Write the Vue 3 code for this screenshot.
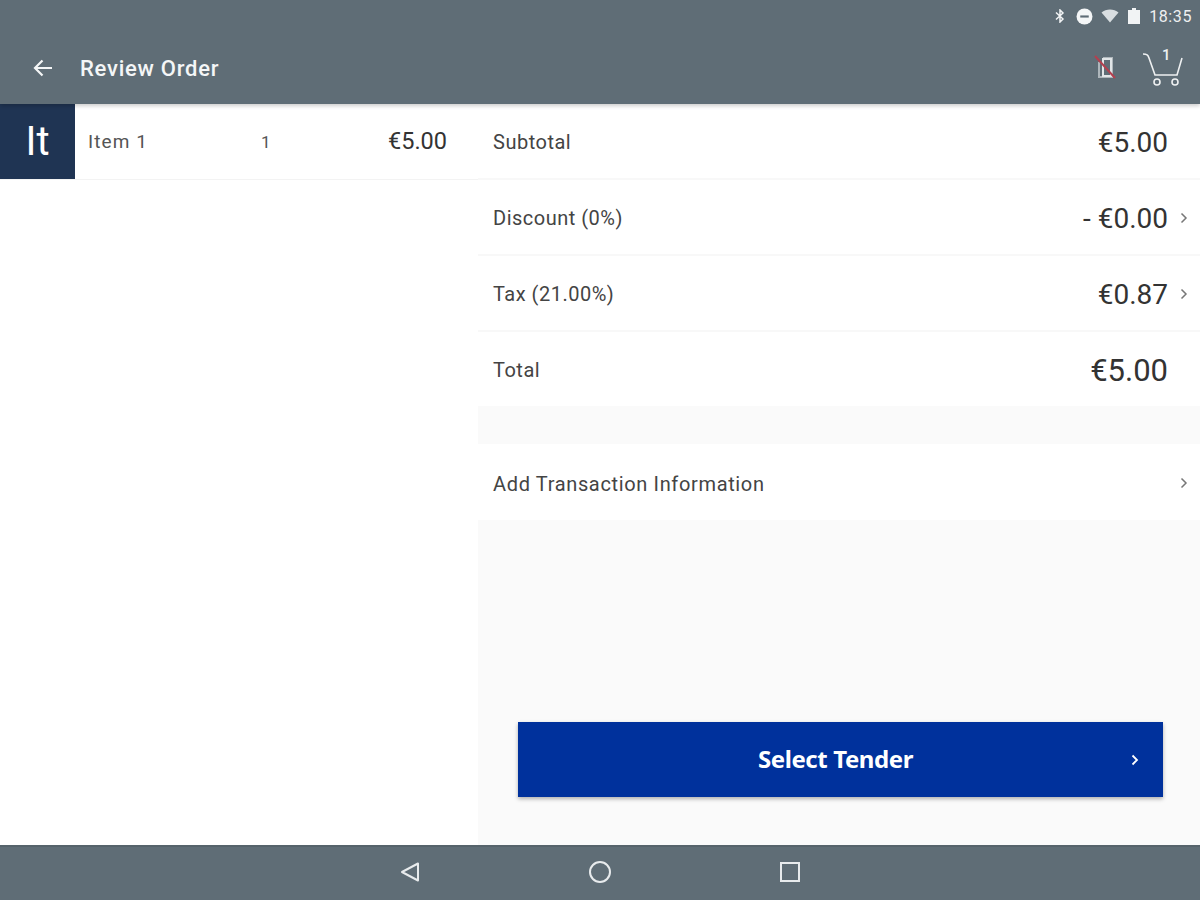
<script setup>
const summary = [
  { label: 'Subtotal', value: '€5.00' },
  { label: 'Discount (0%)', value: '- €0.00', more: true },
  { label: 'Tax (21.00%)', value: '€0.87', more: true }
]
</script>

<template>
  <div class="screen">
    <header class="appbar">
      <div class="status">
        <svg width="10" height="14" viewBox="0 0 10 14" class="st-bt">
          <path d="M1 3.500l7 6.500-3 3V1l3 3-7 6.500" fill="none" stroke="#f2f4f5" stroke-width="1.500" />
        </svg>
        <svg width="17" height="17" viewBox="0 0 16 16">
          <circle cx="8" cy="8" r="7.500" fill="#f4f6f7" />
          <rect x="4" y="7" width="8" height="2" fill="#5f6d76" />
        </svg>
        <svg width="18" height="14" viewBox="0 0 18 14">
          <path d="M0.500 3.500C5 -0.500 13 -0.500 17.500 3.500L9 13.500z" fill="#d9dee1" />
        </svg>
        <svg width="14" height="16" viewBox="0 0 14 16">
          <path d="M5 0h4v2h4v14H1V2h4z" fill="#f1f3f4" />
        </svg>
        <span class="clock">18:35</span>
      </div>
      <div class="toolbar">
        <svg class="back" width="22" height="20" viewBox="0 0 22 20">
          <path d="M20 10H3M10.500 2.500L3 10l7.500 7.500" fill="none" stroke="#f4f6f7" stroke-width="2.200" />
        </svg>
        <h1 class="title">Review Order</h1>
        <svg class="phone-off" width="22" height="28" viewBox="0 0 22 28">
          <path d="M5 8V23H18V4H9" fill="none" stroke="#aeb6bb" stroke-width="2" />
          <rect x="9" y="5" width="8" height="17" fill="none" stroke="#e1e5e7" stroke-width="2" />
          <path d="M1 2L21 24" stroke="#b3404f" stroke-width="2" />
        </svg>
        <div class="cart">
          <span class="cart-count">1</span>
          <svg width="42" height="36" viewBox="0 0 42 36">
            <path d="M1 2C5 2 6 3 7 6L13 23H35L40 6" fill="none" stroke="#eef0f1" stroke-width="1.600" />
            <circle cx="15" cy="30" r="3" fill="none" stroke="#eef0f1" stroke-width="1.600" />
            <circle cx="33" cy="30" r="3" fill="none" stroke="#eef0f1" stroke-width="1.600" />
          </svg>
        </div>
      </div>
    </header>

    <main class="content">
      <section class="items">
        <div class="item">
          <div class="thumb">It</div>
          <span class="item-name">Item 1</span>
          <span class="item-qty">1</span>
          <span class="item-price">€5.00</span>
        </div>
      </section>

      <section class="side">
        <div v-for="row in summary" :key="row.label" class="row">
          <span class="row-label">{{ row.label }}</span>
          <span class="row-value">{{ row.value }}</span>
          <svg v-if="row.more" class="chev" width="8" height="12" viewBox="0 0 8 12">
            <path d="M1.500 1.500L6 6l-4.500 4.500" fill="none" stroke="#777" stroke-width="1.500" />
          </svg>
        </div>
        <div class="row total">
          <span class="row-label">Total</span>
          <span class="row-value">€5.00</span>
        </div>

        <div class="row info">
          <span class="row-label">Add Transaction Information</span>
          <svg class="chev" width="8" height="12" viewBox="0 0 8 12">
            <path d="M1.500 1.500L6 6l-4.500 4.500" fill="none" stroke="#777" stroke-width="1.500" />
          </svg>
        </div>

        <button class="tender" type="button">
          <span>Select Tender</span>
          <svg class="tender-chev" width="8" height="12" viewBox="0 0 8 12">
            <path d="M1.500 1.500L6 6l-4.500 4.500" fill="none" stroke="#fff" stroke-width="1.800" />
          </svg>
        </button>
      </section>
    </main>

    <footer class="navbar">
      <svg width="22" height="22" viewBox="0 0 22 22">
        <path d="M19 2.500V19.500L3 11z" fill="none" stroke="#e8ebed" stroke-width="2" stroke-linejoin="round" />
      </svg>
      <svg width="24" height="24" viewBox="0 0 24 24">
        <circle cx="12" cy="12" r="10" fill="none" stroke="#e8ebed" stroke-width="2" />
      </svg>
      <svg width="22" height="22" viewBox="0 0 22 22">
        <rect x="2" y="2" width="18" height="18" fill="none" stroke="#e8ebed" stroke-width="2" />
      </svg>
    </footer>
  </div>
</template>

<style scoped>
.screen {
  width: 1200px;
  height: 900px;
  display: flex;
  flex-direction: column;
  overflow: hidden;
  font-family: Roboto, "Noto Sans", sans-serif;
  color: #333;
  background: #fff;
}

.appbar {
  height: 104px;
  flex: none;
  background: #5f6d76;
  position: relative;
  z-index: 1;
  box-shadow: 0 2px 4px rgba(0, 0, 0, 0.2);
}

.status {
  height: 32px;
  display: flex;
  align-items: center;
  justify-content: flex-end;
  gap: 8px;
  padding-right: 8px;
  color: #eef0f1;
}

.status .st-bt {
  margin-right: 3px;
}

.clock {
  font-size: 16px;
  letter-spacing: 0.6px;
}

.toolbar {
  height: 72px;
  display: flex;
  align-items: center;
  padding: 0 16px 7px 32px;
}

.title {
  margin: 0 0 0 26px;
  font-size: 22px;
  font-weight: 500;
  letter-spacing: 0.75px;
  color: #f4f6f7;
  flex: 1;
}

.phone-off {
  margin-right: 26px;
}

.cart {
  position: relative;
  width: 42px;
  height: 36px;
  margin-top: 4px;
}

.cart svg {
  display: block;
}

.cart-count {
  position: absolute;
  top: -6px;
  left: 20px;
  font-size: 15px;
  font-weight: 500;
  color: #eef0f1;
}

.content {
  flex: 1;
  display: flex;
  min-height: 0;
}

.items {
  width: 478px;
  flex: none;
  background: #fff;
}

.item {
  height: 76px;
  display: flex;
  align-items: center;
  border-bottom: 1px solid #f3f3f3;
  box-sizing: border-box;
}

.thumb {
  width: 75px;
  height: 75px;
  flex: none;
  background: #1f3453;
  color: #fff;
  font-size: 40px;
  display: flex;
  align-items: center;
  justify-content: center;
}

.item-name {
  width: 173px;
  margin-left: 13px;
  font-size: 19px;
  letter-spacing: 1.100px;
  color: #555;
}

.item-qty {
  font-size: 17px;
  color: #555;
}

.item-price {
  margin-left: auto;
  margin-right: 31px;
  font-size: 23.500px;
  margin-top: -2px;
}

.side {
  flex: 1;
  background: #fafafa;
  display: flex;
  flex-direction: column;
}

.row {
  height: 76px;
  flex: none;
  box-sizing: border-box;
  display: flex;
  align-items: center;
  padding: 2px 32px 0 15px;
  background: #fff;
  border-bottom: 2px solid #f8f8f8;
  position: relative;
}

.row-label {
  font-size: 20px;
  letter-spacing: 0.5px;
  color: #444;
  flex: 1;
}

.row-value {
  font-size: 28px;
  color: #333;
}

.total .row-value {
  font-size: 31px;
}

.total {
  height: 74px;
  border-bottom: none;
}

.info {
  margin-top: 38px;
  height: 76px;
  padding-top: 3px;
  border-bottom: none;
}

.info .row-label {
  letter-spacing: 0.65px;
}

.chev {
  position: absolute;
  right: 12px;
  top: 32px;
}

.info .chev {
  top: 33px;
}

.tender {
  margin: auto 37px 48px 40px;
  height: 75px;
  flex: none;
  border: none;
  padding: 0 10px 2px 0;
  background: #00319c;
  color: #fff;
  font-family: "Noto Sans", Roboto, sans-serif;
  font-size: 24px;
  font-weight: 700;
  letter-spacing: -0.4px;
  position: relative;
  box-shadow: 0 2px 4px rgba(0, 0, 0, 0.3);
}

.tender-chev {
  position: absolute;
  right: 24px;
  top: 32px;
}

.navbar {
  height: 55px;
  flex: none;
  box-sizing: border-box;
  border-top: 2px solid #56636b;
  padding-bottom: 3px;
  background: #5f6d76;
  display: flex;
  align-items: center;
  justify-content: center;
  gap: 167px;
}
</style>
